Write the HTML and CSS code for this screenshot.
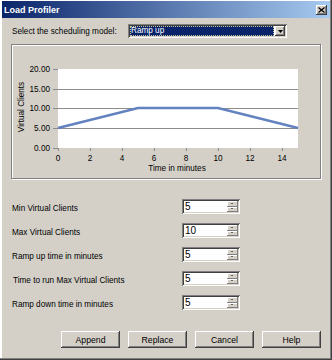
FILE: index.html
```html
<!doctype html>
<html lang="en">
<head>
    <meta charset="UTF-8">
    <title>Load Profiler</title>
    <link rel="stylesheet" href="styles.css">
</head>
<body>
<div class="window">
    <div class="titlebar">
        <span class="title">Load Profiler</span>
        <span class="close">
            <svg width="7" height="6" viewBox="0 0 7 6"><path d="M0.5 0.5 L6.5 5.5 M6.5 0.5 L0.5 5.5" stroke="#000" stroke-width="1.3"/></svg>
        </span>
    </div>
    <div class="content">
        <div class="model-row">
            <label class="model-label">Select the scheduling model:</label>
            <div class="combo">
                <span class="combo-value">Ramp up</span>
                <span class="combo-btn">
                    <svg width="5" height="3" viewBox="0 0 5 3"><path d="M0 0 H5 L2.5 3 Z" fill="#000"/></svg>
                </span>
            </div>
        </div>

        <!-- chart drawn in page coordinates -->
        <div class="chart-box">
            <svg class="chart" width="308" height="133" viewBox="12 45 308 133">
                <rect x="58" y="69" width="240" height="79" fill="#fff"/>
                <g stroke="#8c8c8c" stroke-width="1">
                    <path d="M53 89.5 H298 M53 108.5 H298 M53 128.5 H298 M53 69.5 H58 M53 148.5 H58"/>
                    <path d="M58.5 148 V151 M90.5 148 V151 M122.5 148 V151 M154.5 148 V151 M186.5 148 V151 M218.5 148 V151 M250.5 148 V151 M282.5 148 V151"/>
                </g>
                <polyline points="58,128 138,108 218,108 298,128" fill="none" stroke="#6382c0" stroke-width="2.5"/>
                <g class="axis-text" text-anchor="end">
                    <text x="50" y="72">20.00</text>
                    <text x="50" y="92">15.00</text>
                    <text x="50" y="111">10.00</text>
                    <text x="50" y="131">5.00</text>
                    <text x="50" y="151">0.00</text>
                </g>
                <g class="axis-text" text-anchor="middle">
                    <text x="58" y="161">0</text>
                    <text x="90" y="161">2</text>
                    <text x="122" y="161">4</text>
                    <text x="154" y="161">6</text>
                    <text x="186" y="161">8</text>
                    <text x="218" y="161">10</text>
                    <text x="250" y="161">12</text>
                    <text x="282" y="161">14</text>
                    <text x="177" y="171">Time in minutes</text>
                    <text transform="translate(24 107) rotate(-90)">Virtual Clients</text>
                </g>
            </svg>
        </div>

        <div class="fields">
            <div class="field">
                <label>Min Virtual Clients</label>
                <div class="spin"><span class="spin-value">5</span><span class="spin-btns"><span class="spin-up"></span><span class="spin-down"></span></span></div>
            </div>
            <div class="field">
                <label>Max Virtual Clients</label>
                <div class="spin"><span class="spin-value">10</span><span class="spin-btns"><span class="spin-up"></span><span class="spin-down"></span></span></div>
            </div>
            <div class="field">
                <label>Ramp up time in minutes</label>
                <div class="spin"><span class="spin-value">5</span><span class="spin-btns"><span class="spin-up"></span><span class="spin-down"></span></span></div>
            </div>
            <div class="field">
                <label class="indent">Time to run Max Virtual Clients</label>
                <div class="spin"><span class="spin-value">5</span><span class="spin-btns"><span class="spin-up"></span><span class="spin-down"></span></span></div>
            </div>
            <div class="field">
                <label>Ramp down time in minutes</label>
                <div class="spin"><span class="spin-value">5</span><span class="spin-btns"><span class="spin-up"></span><span class="spin-down"></span></span></div>
            </div>
        </div>

        <div class="buttons">
            <button class="btn">Append</button>
            <button class="btn">Replace</button>
            <button class="btn">Cancel</button>
            <button class="btn">Help</button>
        </div>
    </div>
</div>
</body>
</html>
```
FILE: styles.css
```css
body{
    margin: 0;
    font-family: "Liberation Sans", Arial, sans-serif;
    font-size: 8.2px;
    color: #000;
}
.window{
    width: 332px;
    height: 360px;
    box-sizing: border-box;
    padding: 1px 2px 2px 2px;
    background: #d4d0c8;
    box-shadow: inset -1px -1px 0 #404040, inset -2px -2px 0 #808080, inset 2px 2px 0 #fff;
}
.titlebar{
    height: 17px;
    display: flex;
    align-items: center;
    justify-content: space-between;
    padding: 0 3px 0 2px;
    background: linear-gradient(to right, #0a246a, #a6caf0);
    color: #fff;
    font-weight: bold;
    font-size: 9px;
}
.close{
    width: 11px;
    height: 10px;
    display: flex;
    align-items: center;
    justify-content: center;
    background: #d4d0c8;
    box-shadow: inset -1px -1px 0 #404040, inset 1px 1px 0 #fff, inset -2px -2px 0 #808080;
}
.close svg{
    display: block;
}
.content{
    padding: 0 9px;
}
.model-row{
    display: flex;
    align-items: center;
    margin-top: 6px;
    height: 14px;
}
.model-label{
    width: 117px;
    padding-left: 1px;
    box-sizing: border-box;
}
.combo{
    width: 159px;
    height: 14px;
    box-sizing: border-box;
    padding: 2px;
    display: flex;
    background: #fff;
    box-shadow: inset 1px 1px 0 #808080, inset -1px -1px 0 #fff, inset 2px 2px 0 #404040, inset -2px -2px 0 #d4d0c8;
}
.combo-value{
    flex: 1;
    margin-right: 1px;
    background: #0a246a;
    color: #fff;
    line-height: 10px;
    padding-left: 1px;
    outline: 1px dotted #c8c4a0;
    outline-offset: -1px;
}
.combo-btn{
    width: 10px;
    display: flex;
    align-items: center;
    justify-content: center;
    background: #d4d0c8;
    box-shadow: inset -1px -1px 0 #404040, inset 1px 1px 0 #fff, inset -2px -2px 0 #808080;
}
.combo-btn svg{
    display: block;
}
.chart-box{
    margin-top: 6px;
    height: 135px;
    box-sizing: border-box;
    border: 1px solid #808080;
    box-shadow: 1px 1px 0 #fff, inset 1px 1px 0 #fff;
}
.chart{
    display: block;
}
.axis-text{
    font-family: "Liberation Sans", Arial, sans-serif;
    font-size: 8.2px;
    fill: #000;
}
.fields{
    margin-top: 20px;
    display: flex;
    flex-direction: column;
    gap: 9px;
}
.field{
    display: grid;
    grid-template-columns: 171px 58px;
    align-items: center;
    height: 15px;
}
.field label{
    padding: 3px 0 0 1px;
}
.field label.indent{
    padding-left: 2px;
}
.spin{
    height: 15px;
    box-sizing: border-box;
    padding: 2px;
    display: flex;
    background: #fff;
    box-shadow: inset 1px 1px 0 #808080, inset -1px -1px 0 #fff, inset 2px 2px 0 #404040, inset -2px -2px 0 #d4d0c8;
}
.spin-value{
    flex: 1;
    padding-left: 1px;
    line-height: 11px;
    font-size: 10px;
}
.spin-btns{
    width: 11px;
    display: flex;
    flex-direction: column;
}
.spin-up, .spin-down{
    flex: 1;
    position: relative;
    background: #d4d0c8;
    box-shadow: inset -1px -1px 0 #808080, inset 1px 1px 0 #fff;
}
.spin-up:after, .spin-down:after{
    content: "";
    position: absolute;
    left: 4px;
    top: 2px;
    border-left: 1.5px solid transparent;
    border-right: 1.5px solid transparent;
}
.spin-up:after{
    border-bottom: 1.5px solid #000;
}
.spin-down:after{
    top: 1px;
    border-top: 1.5px solid #000;
}
.buttons{
    margin-top: 21px;
    display: flex;
    justify-content: flex-end;
    gap: 8px;
}
.btn{
    width: 59px;
    height: 17px;
    padding: 0;
    border: none;
    background: #d4d0c8;
    font-family: "Liberation Sans", Arial, sans-serif;
    font-size: 8.7px;
    color: #000;
    box-shadow: inset -1px -1px 0 #404040, inset 1px 1px 0 #fff, inset -2px -2px 0 #808080;
}
```
